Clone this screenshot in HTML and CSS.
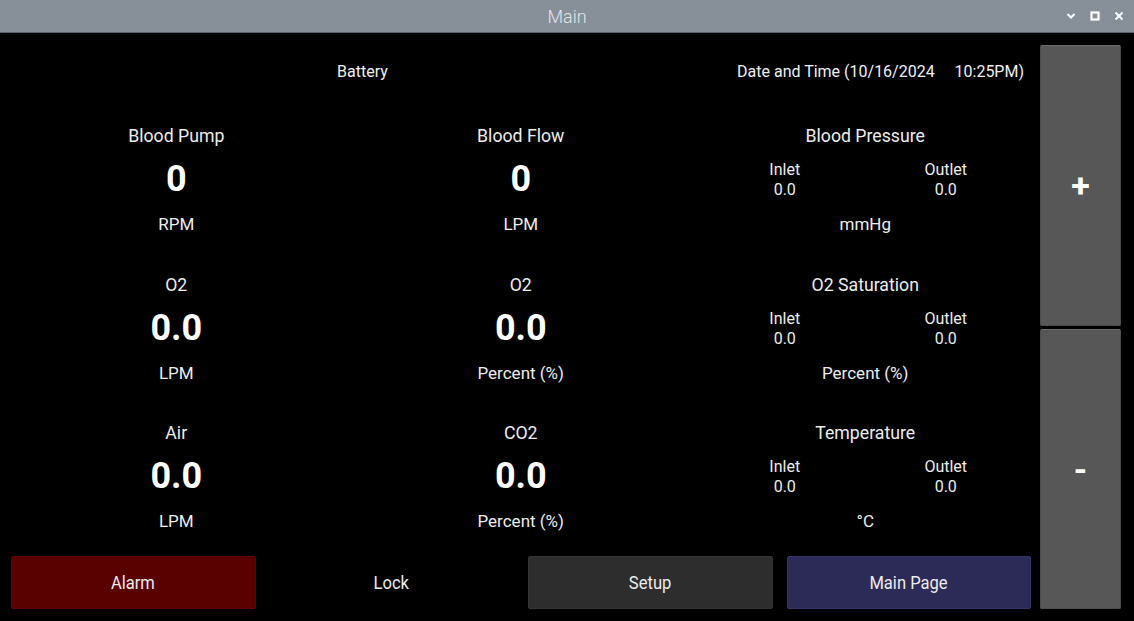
FILE: index.html
```html
<!DOCTYPE html>
<html>
<head>
<meta charset="utf-8">
<title>Main</title>
<link rel="stylesheet" href="styles.css">
</head>
<body>
<div class="window">
  <div class="titlebar">
    <span class="title">Main</span>
    <div class="controls">
      <svg width="10" height="8" viewBox="0 0 10 8"><path d="M1.5 2 L5 5.5 L8.5 2" fill="none" stroke="#fff" stroke-width="2"/></svg>
      <svg width="10" height="10" viewBox="0 0 10 10"><rect x="1.5" y="1.5" width="7" height="7" fill="none" stroke="#fff" stroke-width="2.2"/></svg>
      <svg width="10" height="10" viewBox="0 0 10 10"><path d="M1.5 1.5 L8.5 8.5 M8.5 1.5 L1.5 8.5" fill="none" stroke="#fff" stroke-width="2"/></svg>
    </div>
  </div>
  <div class="main">
    <div class="content">
      <div class="header">
        <span class="battery">Battery</span>
        <span class="datetime">Date and Time (10/16/2024&nbsp;&nbsp;&nbsp;&nbsp;&nbsp;10:25PM)</span>
      </div>
      <div class="grid">
        <div class="cell">
          <div class="label">Blood Pump</div>
          <div class="value">0</div>
          <div class="unit">RPM</div>
        </div>
        <div class="cell">
          <div class="label">Blood Flow</div>
          <div class="value">0</div>
          <div class="unit">LPM</div>
        </div>
        <div class="cell">
          <div class="label">Blood Pressure</div>
          <div class="pair">
            <div class="side"><div>Inlet</div><div>0.0</div></div>
            <div class="side"><div>Outlet</div><div>0.0</div></div>
          </div>
          <div class="unit">mmHg</div>
        </div>
        <div class="cell">
          <div class="label">O2</div>
          <div class="value">0.0</div>
          <div class="unit">LPM</div>
        </div>
        <div class="cell">
          <div class="label">O2</div>
          <div class="value">0.0</div>
          <div class="unit">Percent (%)</div>
        </div>
        <div class="cell">
          <div class="label">O2 Saturation</div>
          <div class="pair">
            <div class="side"><div>Inlet</div><div>0.0</div></div>
            <div class="side"><div>Outlet</div><div>0.0</div></div>
          </div>
          <div class="unit">Percent (%)</div>
        </div>
        <div class="cell">
          <div class="label">Air</div>
          <div class="value">0.0</div>
          <div class="unit">LPM</div>
        </div>
        <div class="cell">
          <div class="label">CO2</div>
          <div class="value">0.0</div>
          <div class="unit">Percent (%)</div>
        </div>
        <div class="cell">
          <div class="label">Temperature</div>
          <div class="pair">
            <div class="side"><div>Inlet</div><div>0.0</div></div>
            <div class="side"><div>Outlet</div><div>0.0</div></div>
          </div>
          <div class="unit">°C</div>
        </div>
      </div>
      <div class="buttons">
        <button class="btn alarm"><span>Alarm</span></button>
        <button class="btn lock"><span>Lock</span></button>
        <button class="btn setup"><span>Setup</span></button>
        <button class="btn mainpage"><span>Main Page</span></button>
      </div>
    </div>
    <div class="side-col">
      <button class="step">+</button>
      <button class="step">-</button>
    </div>
  </div>
</div>
</body>
</html>
```

FILE: styles.css
```css
* { box-sizing: border-box; }
html, body {
  margin: 0;
  padding: 0;
  background: #000;
  width: 1134px;
  height: 621px;
  overflow: hidden;
  font-family: Roboto, "Liberation Sans", sans-serif;
  color: #ededed;
}
.window {
  width: 1134px;
  height: 621px;
  display: flex;
  flex-direction: column;
}
.titlebar {
  height: 33px;
  background: #878f98;
  border-bottom: 1px solid #5d636b;
  position: relative;
  display: flex;
  align-items: center;
  justify-content: center;
}
.title {
  font-size: 18px;
  font-weight: 300;
  color: #e4e6e9;
  line-height: 33px;
}
.controls {
  position: absolute;
  right: 10px;
  top: 0;
  height: 32px;
  display: flex;
  align-items: center;
  gap: 14px;
}
.controls svg { display: block; }
.main {
  flex: 1;
  display: flex;
}
.content {
  width: 1031px;
  display: flex;
  flex-direction: column;
}
.header {
  height: 90px;
  padding-top: 27px;
  display: flex;
  font-size: 16px;
  line-height: 24px;
  color: #f0f0f0;
}
.battery {
  margin-left: 337px;
}
.datetime {
  margin-left: auto;
  margin-right: 7px;
}
.grid {
  margin-left: 4px;
  display: grid;
  grid-template-columns: repeat(3, 344.5px);
  grid-auto-rows: 113px;
  row-gap: 35.5px;
}
.cell {
  display: flex;
  flex-direction: column;
  align-items: center;
  text-align: center;
}
.label {
  font-size: 17.7px;
  line-height: 25px;
  height: 24px;
  padding-top: 1px;
}
.value {
  margin-top: 10px;
  height: 44px;
  line-height: 44px;
  font-size: 36px;
  font-weight: 700;
  color: #fff;
}
.unit {
  margin-top: 11px;
  font-size: 17px;
  line-height: 24px;
  height: 24px;
}
.pair {
  margin-top: 13px;
  display: flex;
  gap: 81px;
  height: 40px;
}
.side {
  width: 80px;
  font-size: 16px;
  line-height: 20px;
  text-align: center;
}
.pair + .unit { margin-top: 12px; }
.buttons {
  margin-top: 23px;
  padding-left: 11px;
  display: grid;
  grid-template-columns: repeat(4, 1fr);
  column-gap: 14px;
  height: 53px;
}
.btn {
  font-family: Roboto, "Liberation Sans", sans-serif;
  font-size: 18px;
  color: #ececec;
  border: 1px solid transparent;
  border-radius: 2px;
  background: transparent;
  padding: 0;
}
.btn span {
  display: inline-block;
  transform: scaleX(0.92);
}
.alarm { background: #590000; border-color: #610404; }
.lock { background: transparent; }
.setup { background: #2d2d2d; border-color: #353535; }
.mainpage { background: #2c2b58; border-color: #36356a; }
.side-col {
  margin: 12px 13px 12px 9px;
  width: 81px;
  display: flex;
  flex-direction: column;
  gap: 3px;
}
.step {
  flex: 1;
  background: #575757;
  border: 1px solid #4d4d4d;
  border-top-color: #6c6c6c;
  border-radius: 2px;
  color: #fff;
  font-family: Roboto, "Liberation Sans", sans-serif;
  font-size: 34px;
  font-weight: 700;
  padding: 0;
}
```
